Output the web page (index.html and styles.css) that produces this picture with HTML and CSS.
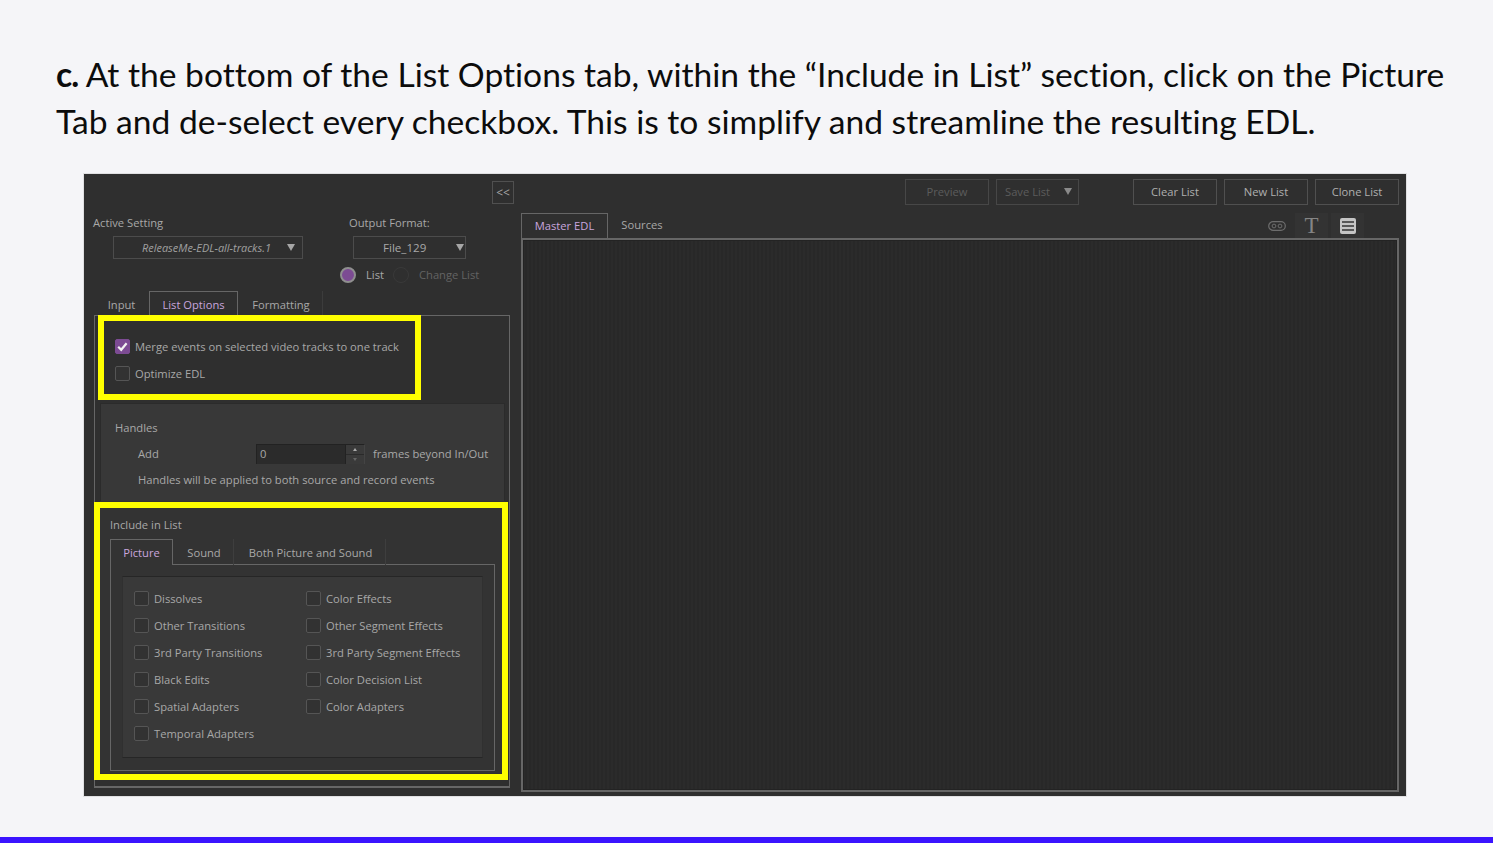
FILE: index.html
```html
<!DOCTYPE html>
<html lang="en">
<head>
<meta charset="utf-8">
<title>EDL List Options</title>
<link rel="stylesheet" href="styles.css">
</head>
<body>
<main class="slide">
  <h1 class="step"><b>c.</b> At the bottom of the List Options tab, within the “Include in List” section, click on the Picture Tab and de-select every checkbox. This is to simplify and streamline the resulting EDL.</h1>
  <section class="app">
    <div class="left">
      <div class="collapse-row"><button class="btn collapse">&lt;&lt;</button></div>
      <div class="settings">
        <div class="setting active-setting">
          <div class="lbl">Active Setting</div>
          <div class="select sel-a"><i class="sel-text">ReleaseMe-EDL-all-tracks.1</i><span class="arrow"></span></div>
        </div>
        <div class="setting output-format">
          <div class="lbl">Output Format:</div>
          <div class="select sel-b"><span class="sel-text">File_129</span><span class="arrow"></span></div>
        </div>
      </div>
      <div class="radios">
        <span class="radio on"></span><span class="radio-label">List</span>
        <span class="radio off"></span><span class="radio-label dim">Change List</span>
      </div>
      <div class="tabs main-tabs">
        <span class="tab plain t-input">Input</span>
        <span class="tab current t-list">List Options</span>
        <span class="tab plain t-format">Formatting</span>
      </div>
      <div class="pane">
        <div class="merge">
          <label class="check-row"><span class="box checked"><svg viewBox="0 0 15 15" width="15" height="15"><path d="M3.2 7.8l3 3 5.4-6.6" fill="none" stroke="#f2f2f2" stroke-width="2.2"/></svg></span>Merge events on selected video tracks to one track</label>
          <label class="check-row"><span class="box"></span>Optimize EDL</label>
        </div>
        <div class="handles">
          <div class="h-title">Handles</div>
          <div class="h-add">
            <span class="h-add-label">Add</span>
            <div class="spin"><span class="spin-val">0</span><span class="spin-btns"><span class="up"></span><span class="down"></span></span></div>
            <span class="h-after">frames beyond In/Out</span>
          </div>
          <div class="h-note">Handles will be applied to both source and record events</div>
        </div>
        <div class="include">
          <div class="inc-title">Include in List</div>
          <div class="tabs inc-tabs">
            <span class="tab current t-pic">Picture</span>
            <span class="tab plain t-snd">Sound</span>
            <span class="tab plain t-both">Both Picture and Sound</span>
          </div>
          <div class="inc-pane">
            <div class="inc-box">
              <label class="opt"><span class="box"></span>Dissolves</label>
              <label class="opt"><span class="box"></span>Color Effects</label>
              <label class="opt"><span class="box"></span>Other Transitions</label>
              <label class="opt"><span class="box"></span>Other Segment Effects</label>
              <label class="opt"><span class="box"></span>3rd Party Transitions</label>
              <label class="opt"><span class="box"></span>3rd Party Segment Effects</label>
              <label class="opt"><span class="box"></span>Black Edits</label>
              <label class="opt"><span class="box"></span>Color Decision List</label>
              <label class="opt"><span class="box"></span>Spatial Adapters</label>
              <label class="opt"><span class="box"></span>Color Adapters</label>
              <label class="opt"><span class="box"></span>Temporal Adapters</label>
            </div>
          </div>
        </div>
      </div>
    </div>
    <div class="right">
      <div class="toolbar">
        <button class="btn tb dim-btn">Preview</button>
        <button class="btn tb save dim-btn"><span>Save List</span><span class="arrow"></span></button>
        <button class="btn tb clear">Clear List</button>
        <button class="btn tb">New List</button>
        <button class="btn tb clone">Clone List</button>
      </div>
      <div class="tabs-line">
        <div class="tabs edl-tabs">
          <span class="tab current t-master">Master EDL</span>
          <span class="tab t-src">Sources</span>
        </div>
        <div class="views">
          <span class="view v-link"><svg viewBox="0 0 18 10" width="18" height="10"><rect x=".7" y=".7" width="16.6" height="8.6" rx="4.3" fill="none" stroke="#6d6d6d" stroke-width="1.2"/><circle cx="6" cy="5" r="1.9" fill="none" stroke="#6d6d6d"/><circle cx="12" cy="5" r="1.9" fill="none" stroke="#6d6d6d"/></svg></span>
          <span class="view v-t">T</span>
          <span class="view v-list"><svg viewBox="0 0 16 16" width="16" height="16"><rect width="16" height="16" rx="2" fill="#c4c4c4"/><path d="M2 4h12M2 8h12M2 12h12" stroke="#333" stroke-width="1.4"/></svg></span>
        </div>
      </div>
      <div class="edl-pane"></div>
    </div>
    <div class="mark mark-a"></div>
    <div class="mark mark-b"></div>
  </section>
</main>
<div class="bar"></div>
</body>
</html>
```
FILE: styles.css
```css
* { box-sizing: border-box; }
html, body { margin: 0; padding: 0; }
body {
  width: 1493px; height: 843px; overflow: hidden;
  background: #f5f5f8;
  font-family: "Open Sans", "Liberation Sans", sans-serif;
  display: flex; flex-direction: column;
}
.slide { height: 837px; padding: 51px 0 0 56px; }
.step {
  margin: 0; width: 1410px;
  font: 400 33.6px/46.5px Lato, "Liberation Sans", sans-serif;
  font-variant-ligatures: none;
  color: #0c0c0c;
}
.step b { font-weight: 700; letter-spacing: -1px; }
.bar { height: 6px; background: #3b14ff; }

.app {
  position: relative;
  width: 1322px; height: 622px; margin: 30px 0 0 28px;
  background: #2f2f2f;
  display: flex;
  font-size: 11.2px; color: #a8a8a8;
  box-shadow: 0 0 0 1px #8a8a8a33;
}
.left { width: 430px; padding-left: 10px; flex: none; }
.btn {
  font: inherit; color: #b4b4b4; background: transparent;
  border: 1px solid #505050; padding: 0;
}
.collapse-row { display: flex; justify-content: flex-end; padding-top: 7px; }
.collapse { width: 22px; height: 23px; font-size: 12px; color: #a6a6a6; }

.settings { display: flex; margin-top: 10px; }
.setting { flex: none; }
.active-setting { width: 256px; }
.lbl { height: 18px; line-height: 18px; margin-left: -1px; }
.select {
  position: relative; height: 23px; margin-top: 4px;
  border: 1px solid #4c4c4c; display: flex; align-items: center;
}
.sel-a { width: 190px; margin-left: 19px; padding-left: 28px; }
.sel-b { width: 113px; margin-left: 3px; padding-left: 29px; }
.sel-a .sel-text { color: #a0a0a0; font-size: 10.95px; }
.sel-b .sel-text { font-size: 11.6px; }
.arrow {
  display: inline-block; width: 0; height: 0;
  border-left: 4px solid transparent; border-right: 4px solid transparent;
  border-top: 7px solid #a6a6a6;
}
.sel-a .arrow { position: absolute; right: 7px; top: 7px; }
.sel-b .arrow { position: absolute; right: 1px; top: 7px; }

.radios { display: flex; align-items: center; height: 16px; margin-top: 8px; padding-left: 246px; }
.radio { width: 16px; height: 16px; border-radius: 50%; flex: none; }
.radio.on { background: #7c4b93; border: 2px solid #8f8f8f; }
.radio.off { border: 1px solid #393939; margin-left: 9px; }
.radio-label { margin-left: 10px; padding-bottom: 1px; }
.radio-label.dim { color: #636363; }

.tabs { display: flex; }
.tab { display: flex; align-items: center; justify-content: center; }
.tab.plain { padding-top: 1px; padding-left: 2px; }
.tab.current { color: #c9a6de; border: 1px solid #666; border-bottom: 0; }
.main-tabs { height: 25px; margin-top: 8px; position: relative; z-index: 1; margin-bottom: -1px; }
.t-input { width: 53px; margin-right: 2px; }
.t-list { width: 89px; background: #2f2f2f; }
.t-format { width: 85px; border-right: 1px solid #3c3c3c; }

.pane {
  width: 416px; height: 473px;
  border: 1px solid #666; border-bottom-width: 2px;
  padding: 23px 4px 0 5px;
}
.merge { height: 64px; padding-left: 15px; display: flex; flex-direction: column; gap: 12px; }
.check-row, .opt { display: flex; align-items: center; height: 15px; white-space: nowrap; }
.box {
  width: 15px; height: 15px; flex: none; margin-right: 5px;
  border: 1px solid #555; border-radius: 2px; background: #323232;
}
.box.checked { background: #7c4b93; border-color: #7c4b93; }
.box svg { display: block; margin: -1px; }

.handles {
  height: 98px; background: #383838; border: 1px solid #2b2b2b; border-bottom: 0;
  padding: 15px 0 0 14px;
}
.h-title, .inc-title { height: 18px; line-height: 18px; }
.h-add { display: flex; align-items: center; height: 20px; margin-top: 7px; padding-left: 23px; }
.h-add-label { width: 118px; padding-bottom: 2px; }
.h-after { padding-bottom: 2px; }
.spin {
  width: 109px; height: 20px; margin-right: 8px; display: flex;
  border-top: 1px solid #222; border-left: 1px solid #222; border-right: 1px solid #444;
  background: #2b2b2b;
}
.spin-val { flex: 1; padding-left: 3px; line-height: 18px; }
.spin-btns { width: 19px; background: #3a3a3a; display: flex; flex-direction: column; border-left: 1px solid #222; }
.up, .down { flex: 1; display: flex; align-items: center; justify-content: center; }
.up { border-bottom: 1px solid #2a2a2a; }
.up::after { content: ""; border: 2px solid transparent; border-bottom: 3px solid #aaa; border-top: 0; }
.down::after { content: ""; border: 2px solid transparent; border-top: 3px solid #666; border-bottom: 0; }
.h-note { margin-top: 7px; height: 18px; line-height: 18px; padding-left: 23px; }

.include { height: 272px; background: #333; padding: 15px 0 0 10px; }
.inc-tabs { height: 26px; margin-top: 5px; position: relative; z-index: 1; margin-bottom: -1px; }
.t-pic { width: 63px; background: #333; }
.t-snd { width: 61px; border-right: 1px solid #3e3e3e; }
.t-both { width: 152px; border-right: 1px solid #3e3e3e; }
.inc-pane {
  width: 385px; height: 207px; padding: 11px 11px 0 11px;
  border: 1px solid #666;
}
.inc-box {
  width: 361px; height: 182px; background: #393939;
  border: 1px solid #262626; border-left-color: #303030; border-right-color: #303030;
  padding: 14px 0 0 11px;
  display: grid; grid-template-columns: 172px 1fr; grid-auto-rows: 15px; row-gap: 12px;
}

.right { flex: 1; padding: 0 7px 0 7px; min-width: 0; }
.toolbar { display: flex; justify-content: flex-end; padding-top: 5px; gap: 7px; height: 39px; }
.tb { width: 84px; height: 26px; color: #b0b0b0; padding-bottom: 2px; }
.dim-btn { color: #5c5c5c; border-color: #474747; }
.save { display: flex; align-items: center; justify-content: space-between; width: 83px; padding: 0 6px 2px 8px; margin-right: 47px; }
.save .arrow { border-top-color: #8a8a8a; }
.tabs-line { display: flex; justify-content: space-between; height: 25px; }
.edl-tabs { height: 25px; position: relative; }
.t-master { width: 87px; padding-bottom: 2px; }
.t-src { width: 68px; padding-bottom: 2px; }
.views { display: flex; align-items: center; height: 25px; padding-right: 35px; }
.view { display: flex; align-items: center; justify-content: center; height: 25px; }
.v-link { width: 27px; margin-right: 2px; }
.v-t { width: 33px; background: #333; margin-left: 3px; font: 400 23px/25px "Liberation Serif", serif; color: #858585; }
.v-list { width: 33px; background: #333; margin-left: 3px; }
.edl-pane {
  width: 878px; height: 554px;
  border: 2px solid #666;
  background: repeating-linear-gradient(90deg, #2b2b2b 0 2px, #282828 2px 4px);
  box-shadow: inset 0 0 0 1px #232323;
}

.mark { position: absolute; border: 6px solid #ffff00; pointer-events: none; z-index: 3; }
.mark-a { left: 14px; top: 141px; width: 323px; height: 85px; }
.mark-b { left: 10px; top: 328px; width: 414px; height: 278px; }
```
